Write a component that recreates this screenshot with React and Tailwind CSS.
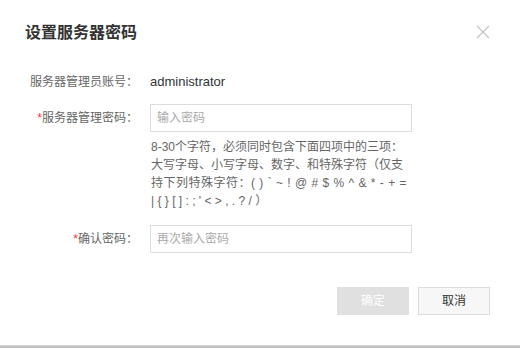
import React from 'react';

const font = { fontFamily: '"Liberation Sans", "Noto Sans CJK SC", sans-serif' };

const Label = ({ required, children }) => (
  <div className="w-[138px] shrink-0 text-right text-[12px] text-[#666]">
    {required && <span className="text-[#e4393c]">*</span>}
    {children}
  </div>
);

const Field = ({ placeholder }) => (
  <input
    type="password"
    placeholder={placeholder}
    className="h-[28px] w-[262px] border border-[#dcdcdc] bg-white px-[6px] text-[12px] text-[#333] outline-none placeholder:text-[#aaa]"
    style={font}
  />
);

export default function App() {
  return (
    <div className="flex h-[348px] w-[520px] flex-col bg-white" style={font}>
      <div className="flex h-[345px] flex-col">
        {/* En-tête */}
        <div className="flex h-[66px] items-center justify-between pl-[25px] pr-[30px]">
          <h2 className="text-[16px] font-bold text-[#333]">设置服务器密码</h2>
          <svg width="14" height="14" viewBox="0 0 14 14" className="mb-[2px]">
            <path d="M1 1 L13 13 M13 1 L1 13" stroke="#c4c4c4" strokeWidth="1.3" />
          </svg>
        </div>

        {/* Compte */}
        <div className="mt-[2px] flex h-[28px] items-center gap-[12px]">
          <Label>服务器管理员账号：</Label>
          <span className="text-[13px] text-[#333]">administrator</span>
        </div>

        {/* Mot de passe */}
        <div className="mt-[8px] flex items-center gap-[12px]">
          <Label required>服务器管理密码：</Label>
          <Field placeholder="输入密码" />
        </div>
        <p className="mt-[6px] pl-[151px] text-[12px] leading-[18px] text-[#666]">
          <span className="block">8-30个字符，必须同时包含下面四项中的三项：</span>
          <span className="block">大写字母、小写字母、数字、和特殊字符（仅支</span>
          <span className="block tracking-[0.5px]">持下列特殊字符：( ) ` ~ ! @ # $ % ^ &amp; * - + =</span>
          <span className="block">| {'{'} {'}'} [ ] : ; ' &lt; &gt; , . ? / ）</span>
        </p>

        {/* Confirmation */}
        <div className="mt-[15px] flex items-center gap-[12px]">
          <Label required>确认密码：</Label>
          <Field placeholder="再次输入密码" />
        </div>

        {/* Boutons */}
        <div className="mt-[34px] flex justify-end gap-[9px] pr-[30px]">
          <button
            disabled
            className="h-[28px] w-[72px] bg-[#e0e0e0] text-[12px] text-white"
            style={font}
          >
            确定
          </button>
          <button
            className="h-[28px] w-[72px] border border-[#dcdcdc] bg-[#f7f7f7] text-[12px] text-[#333]"
            style={font}
          >
            取消
          </button>
        </div>
      </div>
      <div className="h-[3px] bg-gradient-to-b from-[#d8d8d8] to-[#b4b4b4]" />
    </div>
  );
}
